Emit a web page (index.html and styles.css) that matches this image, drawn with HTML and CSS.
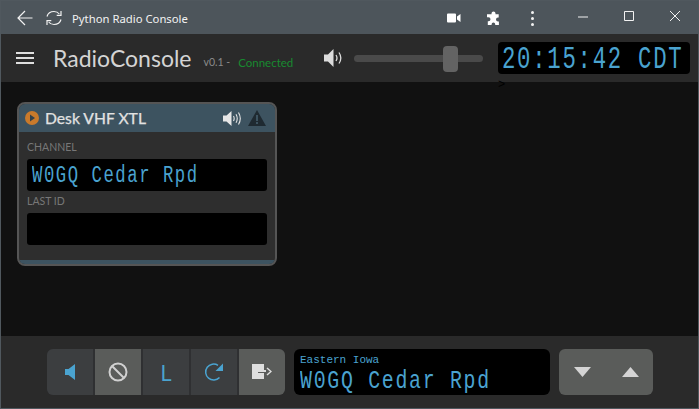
FILE: index.html
```html
<!DOCTYPE html>
<html lang="en">
<head>
<meta charset="utf-8">
<title>Python Radio Console</title>
<link rel="stylesheet" href="styles.css">
</head>
<body>
<div class="app">
  <header class="titlebar">
    <svg class="tb-back" width="16" height="16" viewBox="0 0 16 16"><path d="M15.500 8H1.200M8 1L1 8l7 7" fill="none" stroke="#f2f2f2" stroke-width="1.200"/></svg>
    <svg class="tb-reload" width="16" height="16" viewBox="0 0 16 16"><path d="M1 6.500C2 3 4.500 1.500 8 1.500c2.500 0 4.200 1 5.300 2.500M15 9.500C14 13 11.500 14.500 8 14.500c-2.500 0-4.200-1-5.300-2.500" fill="none" stroke="#f2f2f2" stroke-width="1.200"/><path d="M15 1v4.300h-4.300M1 15v-4.300h4.300" fill="none" stroke="#f2f2f2" stroke-width="1.200"/></svg>
    <span class="tb-title">Python Radio Console</span>
    <svg class="tb-cam" width="14" height="10" viewBox="0 0 14 10"><path d="M0 1.500a1 1 0 0 1 1-1h7a1 1 0 0 1 1 1v7a1 1 0 0 1-1 1H1a1 1 0 0 1-1-1zM10 3.500l3.500-2.500v8L10 6.500z" fill="#fff"/></svg>
    <svg class="tb-puzzle" width="15" height="15" viewBox="0 0 15 15"><path d="M5.500 2.500a2 2 0 0 1 4 0v.8h3.200v3.200h-.7a2 2 0 0 0 0 4h.9v3.500H9.200v-.8a1.800 1.800 0 0 0-3.600 0v.8H1.800v-3.700h.7a2 2 0 0 0 0-4h-1.500V3.300h4.500z" fill="#fff"/></svg>
    <span class="tb-dots"><i></i><i></i><i></i></span>
    <svg class="tb-min" width="10" height="10" viewBox="0 0 10 10"><path d="M0 5h10" stroke="#f2f2f2" stroke-width="1"/></svg>
    <svg class="tb-max" width="10" height="10" viewBox="0 0 10 10"><path d="M.5.500h9v9h-9z" fill="none" stroke="#f2f2f2" stroke-width="1"/></svg>
    <svg class="tb-close" width="10" height="10" viewBox="0 0 10 10"><path d="M0 0l10 10M10 0L0 10" stroke="#f2f2f2" stroke-width="1"/></svg>
  </header>

  <nav class="navbar">
    <span class="burger"><i></i><i></i><i></i></span>
    <span class="brand">RadioConsole</span>
    <span class="version">v0.1 -</span>
    <span class="status">Connected</span>
    <svg class="vol-icon" width="19" height="18" viewBox="0 0 19 18"><path d="M0 5.500h4L9.500 0v18L4 12.500H0z" fill="#dcdcdc"/><path d="M12 6c1.200 1.800 1.200 4.200 0 6M15 3.500c2.200 3.300 2.200 7.700 0 11" fill="none" stroke="#dcdcdc" stroke-width="1.300"/></svg>
    <div class="slider"><span class="thumb"></span></div>
    <div class="clock"><span class="clock-text">20:15:42 CDT</span></div>
    <span class="caret">&gt;</span>
  </nav>

  <main class="content">
    <section class="card">
      <div class="card-head">
        <svg class="play" width="14" height="14" viewBox="0 0 14 14"><circle cx="7" cy="7" r="7" fill="#c97a2b"/><path d="M5 3.500L10 7l-5 3.500z" fill="#33414a"/></svg>
        <span class="card-title">Desk VHF XTL</span>
        <svg class="card-vol" width="19" height="15" viewBox="0 0 19 15"><path d="M0 4.500h3.500L8.500 0v15l-5-4.500H0z" fill="#e6e6e6"/><path d="M10.500 5c.8 1.500.8 3.500 0 5M13 3.200c1.500 2.600 1.500 6 0 8.600M15.500 1.500c2.200 3.700 2.200 8.300 0 12" fill="none" stroke="#e6e6e6" stroke-width="1.100"/></svg>
        <svg class="card-warn" width="18" height="16" viewBox="0 0 18 16"><path d="M9 0l9 16H0z" fill="#1f2a31"/><path d="M8 5h2v6H8zM8 12h2v2H8z" fill="#3d5360"/></svg>
      </div>
      <div class="card-body">
        <div class="field-label">CHANNEL</div>
        <div class="field-display"><span class="field-text">W0GQ Cedar Rpd</span></div>
        <div class="field-label label-second">LAST ID</div>
        <div class="field-display"></div>
      </div>
      <div class="card-foot"></div>
    </section>
  </main>

  <footer class="footer">
    <div class="btn-group">
      <button class="btn">
        <svg width="10" height="16" viewBox="0 0 10 16"><path d="M0 5h3.500L10 0v16L3.500 11H0z" fill="#4aa3d0"/></svg>
      </button>
      <button class="btn btn-on">
        <svg width="20" height="20" viewBox="0 0 20 20"><circle cx="10" cy="10" r="8.500" fill="none" stroke="#d0d0d0" stroke-width="2"/><path d="M4 4l12 12" stroke="#d0d0d0" stroke-width="2"/></svg>
      </button>
      <button class="btn btn-letter">L</button>
      <button class="btn">
        <svg width="20" height="20" viewBox="0 0 20 20"><path d="M15.500 15.500A8 8 0 1 1 14 3.300" fill="none" stroke="#4aa3d0" stroke-width="1.500"/><path d="M19 1.500V9h-7.500z" fill="#4aa3d0"/></svg>
      </button>
      <button class="btn btn-on">
        <svg width="20" height="16" viewBox="0 0 20 16"><path d="M0 0h12v6H6v3h6v6H0z" fill="#dedede"/><path d="M6 7h8" stroke="#dedede" stroke-width="2" fill="none"/><path d="M15 4l4 3.500-4 3.500" fill="none" stroke="#dedede" stroke-width="1.500"/></svg>
      </button>
    </div>
    <div class="lcd">
      <div class="lcd-small">Eastern Iowa</div>
      <div class="lcd-big"><span class="lcd-big-text">W0GQ Cedar Rpd</span></div>
    </div>
    <div class="nav-pair">
      <svg width="17" height="10" viewBox="0 0 17 10"><path d="M0 0h17L8.500 10z" fill="#d4d4d4"/></svg>
      <svg width="17" height="10" viewBox="0 0 17 10"><path d="M0 10h17L8.500 0z" fill="#d4d4d4"/></svg>
    </div>
  </footer>
</div>
</body>
</html>
```

FILE: styles.css
```css
* { box-sizing: border-box; }
html, body { margin: 0; padding: 0; height: 100%; overflow: hidden; background: #111; }
.app {
  width: 699px; height: 409px; display: flex; flex-direction: column;
  border: 1px solid #50585e;
  font-family: "Noto Sans", sans-serif;
}
.titlebar {
  height: 33px; flex: none; background: #4d555b; display: flex; align-items: center;
  padding: 0 0 0 16px; color: #f2f2f2;
}
.tb-back { margin-top: 1px; }
.tb-reload { margin-left: 13px; margin-top: 1px; }
.tb-title { font: 11.300px "Noto Sans", sans-serif; margin-left: 10px; margin-top: 1px; width: 375px; white-space: nowrap; }
.tb-puzzle { margin-left: 25px; margin-top: 1px; }
.tb-dots { display: flex; flex-direction: column; gap: 3px; margin-left: 30px; margin-top: 2px; }
.tb-dots i { width: 3px; height: 3px; background: #f2f2f2; border-radius: 50%; display: block; }
.tb-min { margin-left: 44px; margin-top: -2px; }
.tb-max { margin-left: 36px; margin-top: -3px; }
.tb-close { margin-left: 36px; margin-top: -3px; }

.navbar {
  height: 48px; flex: none; background: #2a2a2a; display: flex; align-items: center;
  padding: 0 8px 0 15px; position: relative;
}
.burger { display: flex; flex-direction: column; gap: 3px; width: 18px; }
.burger i { display: block; height: 2px; background: #dedede; }
.brand { font: 23px Lato, sans-serif; color: #d4d4d4; margin-left: 19px; }
.version { font: 10.500px Lato, sans-serif; color: #8a8a8a; margin-left: 12px; margin-top: 8px; }
.status { font: 11.500px Lato, sans-serif; color: #188a30; margin-left: 8px; margin-top: 8px; width: 59px; white-space: nowrap; }
.vol-icon { margin-left: 27px; }
.slider {
  width: 129px; height: 7px; background: #4a4a4a; border-radius: 4px; margin-left: 11px;
  position: relative;
}
.thumb {
  position: absolute; left: 89px; top: -9px; width: 15px; height: 26px; background: #636363;
  border-radius: 4px;
}
.clock {
  width: 192px; height: 32px; background: #000; border-radius: 4px; margin-left: 15px;
  color: #4aa3d0; font: 31px/35px "Liberation Mono", monospace; letter-spacing: 2.400px;
  padding-left: 4px; white-space: nowrap; flex: none;
}
.clock-text { display: block; width: 180px; height: 32px; transform: scaleX(.72); transform-origin: left; }
.caret { position: absolute; left: 497px; top: 44px; font: 12px "Liberation Mono", monospace; color: #000; }

.content { flex: 1; background: #111; padding: 20px 16px; min-height: 0; }
.card {
  width: 260px; height: 164px; border: 2px solid #555; border-radius: 8px; overflow: hidden;
  background: #2e2e2e; display: flex; flex-direction: column;
}
.card-head {
  height: 28px; flex: none; background: #3d5360; display: flex; align-items: center; padding: 0 9px 0 6px;
}
.card-title {
  font: 15.700px Lato, sans-serif; color: #e2e2e2; margin-left: 6px; width: 178px; white-space: nowrap;
  -webkit-text-stroke: .25px #e2e2e2;
}
.card-warn { margin-left: 6px; }
.card-body { flex: 1; padding: 9px 8px 0; min-height: 0; }
.field-label { font: 10.500px/13px Lato, sans-serif; color: #777; }
.label-second { margin-top: 4px; margin-bottom: 2px; }
.field-display {
  height: 32px; background: #000; border-radius: 3px; margin-top: 5px; color: #4aa3d0;
  font: 23px/34px "Liberation Mono", monospace; letter-spacing: 2.070px; padding-left: 5px; white-space: nowrap;
}
.field-text { display: block; height: 32px; transform: scaleX(.75); transform-origin: left; }
.card-foot { height: 4px; flex: none; background: #3d5360; }

.footer {
  height: 72px; flex: none; background: #2a2a2a; display: flex; align-items: center; padding: 0 0 0 46px;
}
.btn-group {
  display: flex; width: 238px; height: 46px; gap: 2px; background: #2f3032; border-radius: 6px; overflow: hidden; flex: none;
}
.btn {
  flex: 1; border: 0; padding: 0; background: #3c3e40; display: flex; align-items: center; justify-content: center;
}
.btn-on { background: #5a5c5a; }
.btn-letter { color: #4aa3d0; font: 22px "Noto Sans", sans-serif; }
.lcd {
  width: 256px; height: 46px; background: #000; border-radius: 6px; margin-left: 9px; padding: 5px 6px 0;
  color: #4aa3d0; font-family: "Liberation Mono", monospace; white-space: nowrap; flex: none;
}
.lcd-small { font-size: 11px; line-height: 12px; }
.lcd-big { font-size: 26.500px; line-height: 30px; letter-spacing: 2.270px; }
.lcd-big-text { display: block; height: 29px; transform: scaleX(.75); transform-origin: left; }
.nav-pair {
  width: 94px; height: 46px; background: #5a5c5a; border-radius: 6px; margin-left: 9px; display: flex;
  align-items: center; justify-content: center; gap: 31px; flex: none;
}
```
